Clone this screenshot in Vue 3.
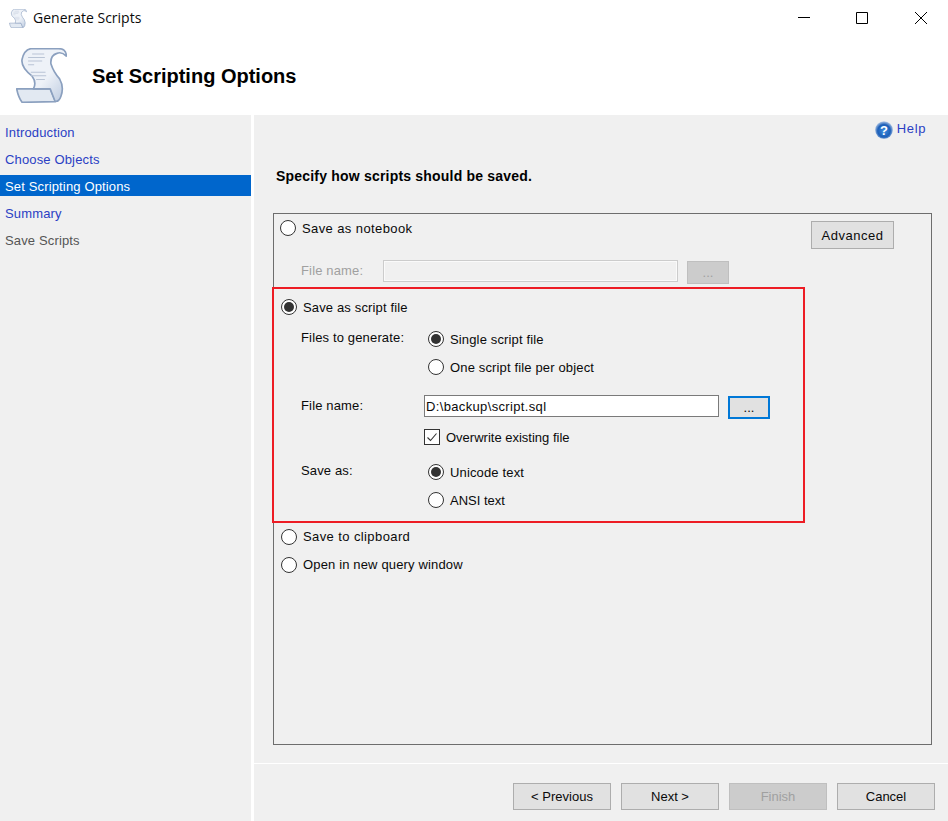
<script setup>
const steps = [
  { label: 'Introduction', state: 'link' },
  { label: 'Choose Objects', state: 'link' },
  { label: 'Set Scripting Options', state: 'active' },
  { label: 'Summary', state: 'link' },
  { label: 'Save Scripts', state: 'muted' },
]
const footerButtons = [
  { label: '< Previous' },
  { label: 'Next >' },
  { label: 'Finish', disabled: true },
  { label: 'Cancel' },
]
</script>

<template>
  <div class="window">
    <header class="titlebar">
      <svg class="scroll small" viewBox="48 28 152 164">
        <use href="#scroll-art" />
      </svg>
      <span class="title">Generate Scripts</span>
      <div class="controls">
        <span class="ctl"><svg width="12" height="12" viewBox="0 0 12 12"><path d="M0 5.5h12" stroke="#000" fill="none" /></svg></span>
        <span class="ctl"><svg width="12" height="12" viewBox="0 0 12 12"><path d="M.5.5h11v11H.5z" stroke="#000" fill="none" /></svg></span>
        <span class="ctl close"><svg width="12" height="12" viewBox="0 0 12 12"><path d="M0 0l12 12M12 0L0 12" stroke="#000" fill="none" /></svg></span>
      </div>
    </header>

    <div class="banner">
      <svg class="scroll big" viewBox="48 28 152 164">
        <defs>
          <linearGradient id="paper" x1="0" y1="0" x2="1" y2="1">
            <stop offset="0" stop-color="#eef2f8" />
            <stop offset="0.55" stop-color="#eef2f8" />
            <stop offset="1" stop-color="#b9c8de" />
          </linearGradient>
          <g id="scroll-art">
            <path d="M50 150 L150 150 L166 188 L66 190 Q55 175 50 150Z" fill="#e2e9f2" stroke="#8ba0bf" stroke-width="5" stroke-linejoin="round" />
            <path d="M92 30 L170 30 Q198 28 198 52 Q184 38 170 44 Q150 50 152 75 Q160 100 178 120 Q192 145 182 172 Q176 190 164 186 L150 150 L100 150 Q110 130 96 112 Q62 85 66 62 Q72 34 92 30Z" fill="url(#paper)" stroke="#8ba0bf" stroke-width="5" stroke-linejoin="round" />
            <path d="M96 46h36M84 56h50M84 67h42M84 78h18M92 100h44M92 111h46M108 122h26" stroke="#b9c4d5" stroke-width="3" fill="none" />
          </g>
        </defs>
        <use href="#scroll-art" />
      </svg>
      <h1 class="heading">Set Scripting Options</h1>
    </div>

    <div class="body">
      <nav class="sidebar">
        <div v-for="step in steps" :key="step.label" class="step" :class="step.state">{{ step.label }}</div>
      </nav>

      <main class="main">
        <div class="help">
          <svg width="18" height="18" viewBox="0 0 18 18">
            <defs>
              <radialGradient id="orb" cx="0.5" cy="0.55" r="0.55">
                <stop offset="0" stop-color="#3f8fe0" />
                <stop offset="0.65" stop-color="#1d5fb8" />
                <stop offset="1" stop-color="#b5cbe8" />
              </radialGradient>
            </defs>
            <circle cx="9" cy="9" r="8.8" fill="url(#orb)" />
            <text x="9" y="14" text-anchor="middle" class="qmark">?</text>
          </svg>
          <span class="help-text">Help</span>
        </div>

        <p class="prompt">Specify how scripts should be saved.</p>

        <section class="panel">
          <div class="top-row">
            <label class="opt first airy"><span class="radio"></span>Save as notebook</label>
            <button class="btn advanced">Advanced</button>
          </div>
          <div class="file-row off">
            <span class="off-label">File name:</span>
            <span class="field disabled"></span>
            <button class="btn dots disabled">...</button>
          </div>

          <div class="highlight">
            <label class="opt head"><span class="radio on"></span>Save as script file</label>

            <div class="grid files">
              <span class="lab">Files to generate:</span>
              <div class="choices">
                <label class="opt"><span class="radio on"></span>Single script file</label>
                <label class="opt"><span class="radio"></span>One script file per object</label>
              </div>
            </div>

            <div class="grid name">
              <span class="lab name-lab">File name:</span>
              <div class="name-col">
                <div class="name-line">
                  <span class="field path">D:\backup\script.sql</span>
                  <button class="btn dots focus">...</button>
                </div>
                <label class="check"><span class="box"><svg width="14" height="14" viewBox="0 0 14 14"><path d="M2.5 7.5l3 3 6-7" stroke="#333" stroke-width="1.1" fill="none" /></svg></span>Overwrite existing file</label>
              </div>
            </div>

            <div class="grid saveas">
              <span class="lab">Save as:</span>
              <div class="choices">
                <label class="opt"><span class="radio on"></span>Unicode text</label>
                <label class="opt tight"><span class="radio"></span>ANSI text</label>
              </div>
            </div>
          </div>

          <div class="tail">
            <label class="opt airy"><span class="radio"></span>Save to clipboard</label>
            <label class="opt"><span class="radio"></span>Open in new query window</label>
          </div>
        </section>

        <footer class="footer">
          <button v-for="b in footerButtons" :key="b.label" class="btn wide" :class="{ disabled: b.disabled }">{{ b.label }}</button>
        </footer>
      </main>
    </div>
  </div>
</template>

<style>
html, body { margin: 0; background: #fff; }
</style>

<style scoped>
.window {
  width: 948px;
  height: 821px;
  overflow: hidden;
  display: flex;
  flex-direction: column;
  background: #fff;
  color: #0a0a0a;
  font: 13px/16px "Liberation Sans", Arial, sans-serif;
  letter-spacing: 0.15px;
}
.titlebar { height: 36px; display: flex; align-items: center; padding-left: 9px; flex: none; }
.scroll.small { width: 18px; height: 19px; }
.scroll.big { width: 51px; height: 55px; margin-top: -1px; filter: blur(0.3px); }
.title { margin-left: 6px; font: 14px/18px "Open Sans", sans-serif; letter-spacing: 0; }
.controls { margin-left: auto; margin-right: -2px; display: flex; }
.ctl { width: 58px; height: 36px; display: flex; align-items: center; justify-content: center; }
.ctl.close { margin-left: 1px; }
.banner { height: 79px; flex: none; display: flex; align-items: center; padding-left: 16px; }
.heading { margin: 0 0 0 25px; font: bold 20px/24px "Liberation Sans", Arial, sans-serif; color: #000; letter-spacing: 0; }
.body { flex: 1; display: flex; min-height: 0; }
.sidebar { width: 251px; background: #f0f0f0; display: flex; flex-direction: column; gap: 6px; padding-top: 6px; flex: none; }
.step { height: 21px; line-height: 23px; padding-left: 5px; }
.step.link { color: #2a3fc4; }
.step.active { background: #0066cc; color: #fff; }
.step.muted { color: #555; }
.main { margin-left: 3px; flex: 1; background: #f0f0f0; display: flex; flex-direction: column; }
.help { height: 30px; display: flex; align-items: center; justify-content: flex-end; padding-right: 22px; color: #2a3fc4; gap: 4px; }
.help-text { letter-spacing: 0.6px; margin-top: -2px; }
.qmark { font: bold 13px "Liberation Sans", sans-serif; fill: #fff; }
.prompt { margin: 21px 0 0 22px; font: bold 14px/20px "Liberation Sans", Arial, sans-serif; letter-spacing: 0.2px; color: #000; }
.panel { margin: 27px 16px 0 19px; height: 530px; border: 1px solid #6d6d6d; flex: none; }
.top-row { display: flex; justify-content: space-between; align-items: flex-start; padding-right: 37px; }
.opt { display: flex; align-items: flex-start; gap: 6px; height: 16px; line-height: 18px; }
.opt.first { margin: 6px 0 0 6px; }
.airy { letter-spacing: 0.4px; }
.tight { letter-spacing: 0; }
.radio { width: 16px; height: 16px; box-sizing: border-box; border: 1px solid #333; border-radius: 50%; background: #fff; flex: none; position: relative; }
.radio.on::after { content: ""; position: absolute; inset: 2px; border-radius: 50%; background: #333; }
.btn { box-sizing: border-box; border: 1px solid #adadad; background: #e1e1e1; color: #0a0a0a; font: inherit; letter-spacing: 0; padding: 0; }
.btn.disabled { background: #ccc; border-color: #bfbfbf; color: #a0a0a0; }
.advanced { width: 83px; height: 28px; margin-top: 7px; letter-spacing: 0.5px; padding-top: 2px; }
.file-row { display: flex; align-items: flex-start; margin-top: 11px; padding-left: 27px; height: 24px; }
.off-label { color: #a0a0a0; width: 82px; margin-top: 3px; }
.field { box-sizing: border-box; width: 295px; height: 22px; border: 1px solid #7a7a7a; background: #fff; padding: 1px 1px 0; line-height: 20px; display: block; color: #0a0a0a; }
.field.path { letter-spacing: 0.35px; }
.field.disabled { background: #f0f0f0; border-color: #ccc; box-shadow: inset 0 0 0 1px #fafafa; }
.dots { width: 42px; height: 23px; margin: 1px 0 0 9px; line-height: 16px; }
.dots.focus { border: 2px solid #0078d7; }
.highlight { box-sizing: border-box; margin: 3px 0 0 -2px; width: 533px; height: 236px; border: 2px solid #ed1c24; padding: 10px 0 0 7px; }
.grid { display: grid; grid-template-columns: 123px 1fr; padding-left: 20px; }
.files { margin-top: 16px; }
.lab { margin-top: -1px; }
.choices { display: flex; flex-direction: column; gap: 12px; padding-left: 4px; }
.name { margin-top: 20px; }
.name-lab { margin-top: 3px; }
.name-line { display: flex; }
.check { display: flex; align-items: flex-start; gap: 6px; margin-top: 10px; height: 16px; line-height: 18px; letter-spacing: 0; }
.box { width: 16px; height: 16px; box-sizing: border-box; border: 1px solid #333; background: #fff; display: flex; align-items: center; justify-content: center; flex: none; }
.saveas { margin-top: 19px; }
.tail { display: flex; flex-direction: column; gap: 12px; margin-top: 6px; padding-left: 7px; }
.tail .opt { line-height: 16px; }
.footer { margin-top: 18px; border-top: 1px solid #fff; flex: 1; display: flex; gap: 10px; justify-content: flex-end; padding: 19px 13px 0 0; }
.wide { width: 98px; height: 27px; }
</style>
